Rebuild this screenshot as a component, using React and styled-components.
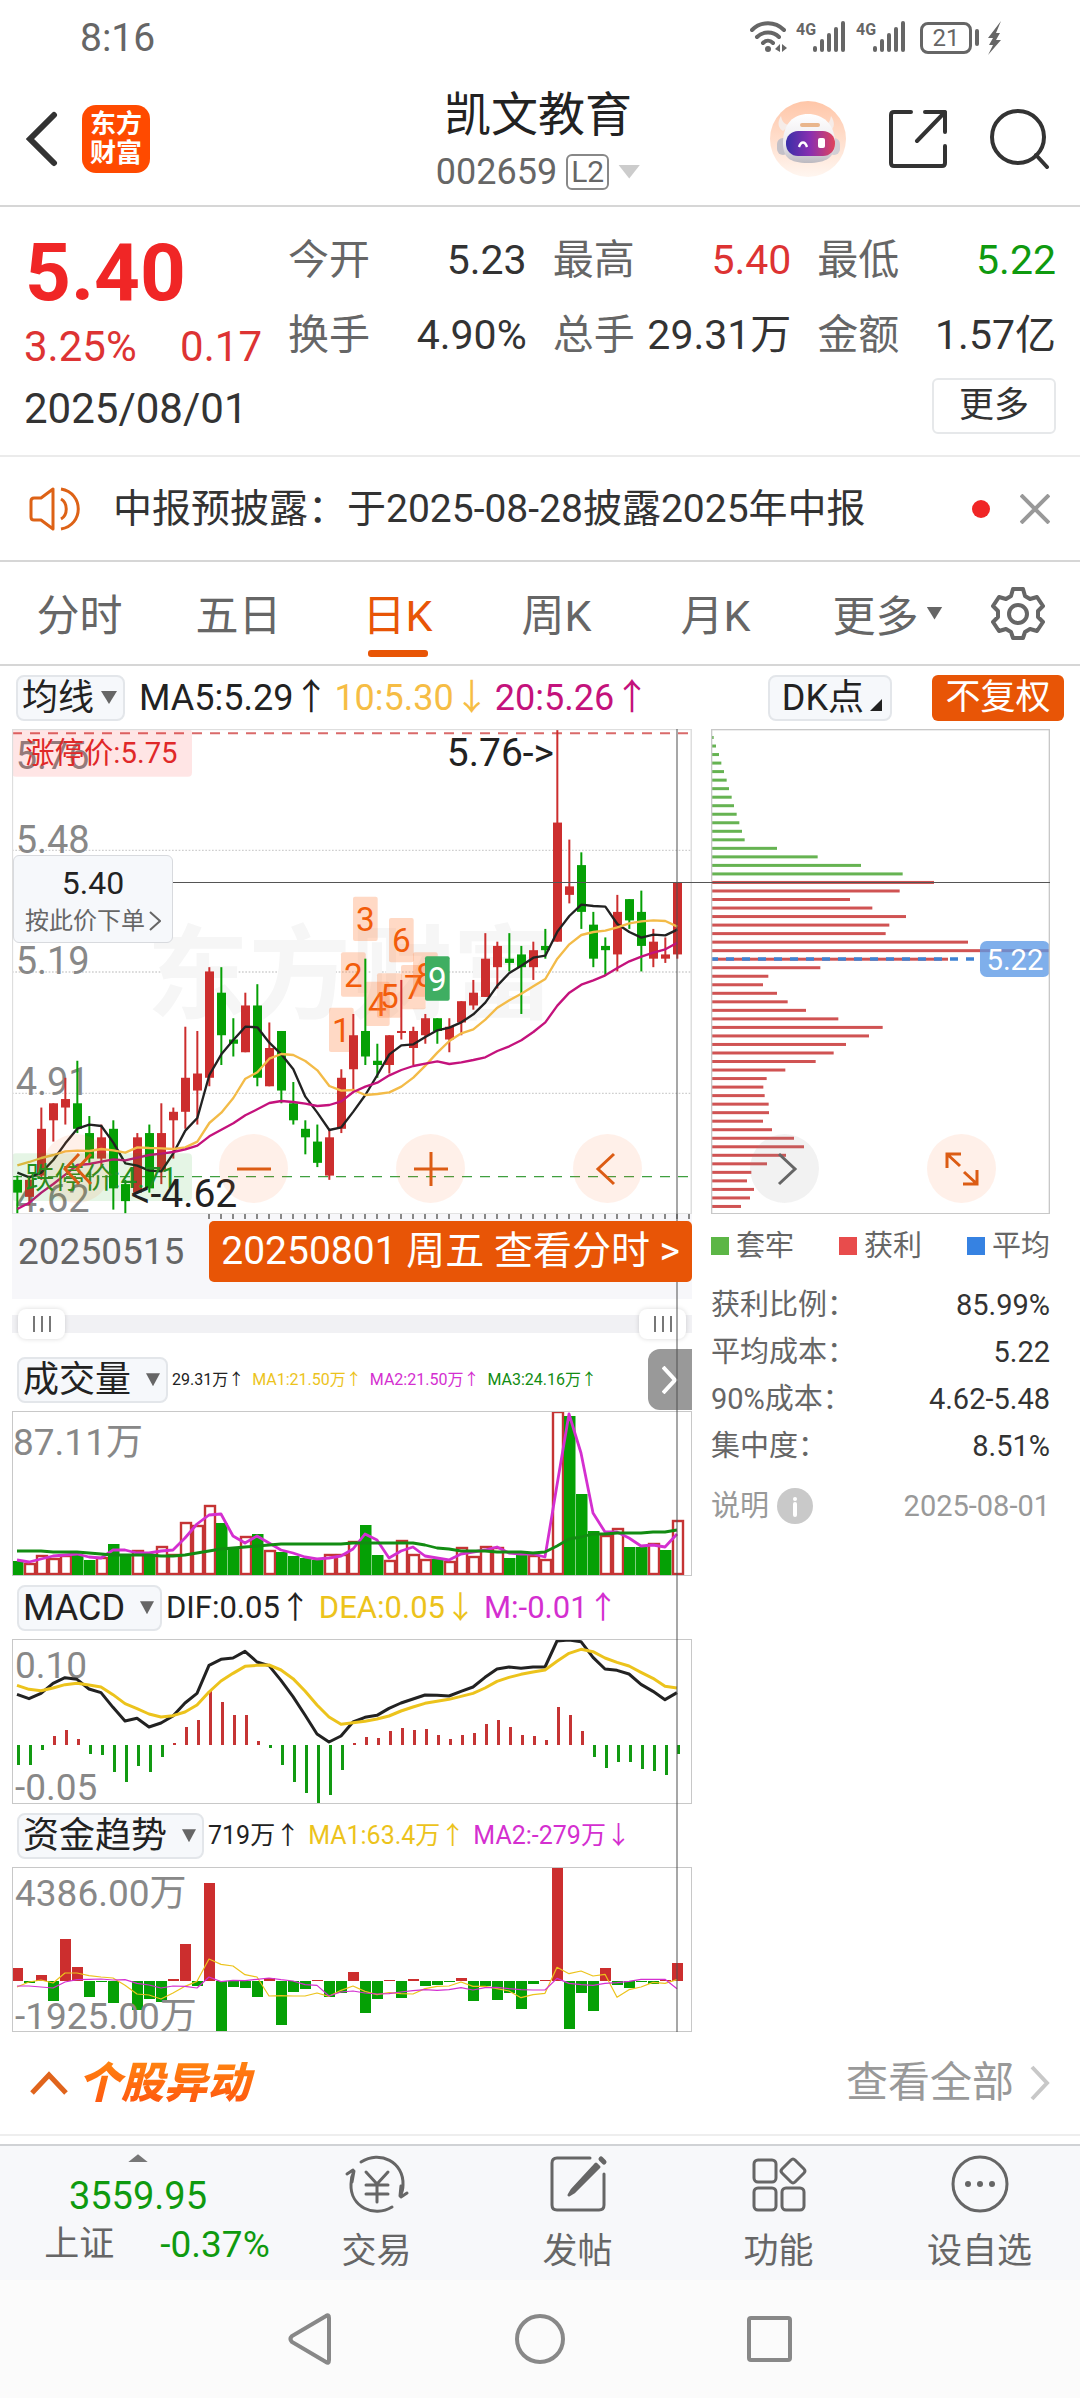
import styled, { createGlobalStyle } from "styled-components";

const RED = "#cc2e2e";
const GREEN = "#05a005";
const ORANGE = "#e85506";

const quotes = [
  { label: "今开", value: "5.23", color: "#333333" },
  { label: "最高", value: "5.40", color: "#dd3333" },
  { label: "最低", value: "5.22", color: "#0f9a0f" },
  { label: "换手", value: "4.90%", color: "#333333" },
  { label: "总手", value: "29.31万", color: "#333333" },
  { label: "金额", value: "1.57亿", color: "#333333" },
];

const periods = ["分时", "五日", "日K", "周K", "月K"];

// [open, close, high, low] in fen
const candles = [
  [470, 467, 471, 462], [466, 470, 471, 464], [471, 482, 487, 470],
  [484, 488, 488, 479], [487, 489, 494, 483], [488, 482, 498, 481],
  [481, 475, 485, 474], [475, 480, 483, 473], [482, 468, 484, 463],
  [469, 465, 470, 462], [467, 480, 481, 467], [481, 468, 483, 467],
  [472, 481, 488, 469], [484, 486, 487, 475], [486, 494, 506, 482],
  [491, 495, 505, 483], [494, 519, 520, 492], [514, 504, 520, 497],
  [503, 502, 508, 499], [500, 511, 514, 500], [511, 494, 516, 492],
  [492, 501, 507, 492], [505, 491, 505, 488], [488, 484, 493, 483],
  [482, 480, 484, 476], [479, 474, 483, 473], [471, 480, 482, 470],
  [482, 494, 496, 481], [496, 504, 509, 491], [505, 499, 522, 497],
  [498, 497, 502, 494], [497, 504, 504, 495], [505, 505, 517, 503],
  [501, 505, 506, 497], [504, 508, 509, 502], [508, 505, 508, 502],
  [503, 506, 508, 500], [507, 512, 512, 504], [511, 514, 517, 510],
  [513, 522, 528, 513], [520, 525, 526, 515], [522, 521, 528, 519],
  [523, 520, 525, 509], [520, 524, 526, 517], [525, 524, 529, 522],
  [526, 554, 576, 526], [537, 539, 550, 535], [544, 533, 547, 529],
  [530, 522, 533, 520], [525, 524, 527, 518], [523, 533, 537, 519],
  [536, 531, 536, 529], [533, 525, 538, 519], [522, 526, 529, 520],
  [522, 523, 527, 521], [523, 540, 540, 522],
];

const ma5 = [
  1358, 1372, 1358, 1320, 1270, 1226, 1214, 1218, 1268, 1330, 1337, 1352, 1354,
  1300, 1232, 1194, 1065, 1003, 960, 920, 922, 968, 1003, 1048, 1130, 1178,
  1230, 1222, 1175, 1125, 1065, 1003, 976, 973, 951, 931, 923, 907, 883, 848,
  797, 759, 737, 713, 707, 635, 588, 554, 558, 560, 612, 636, 653, 644, 646,
  629,
];
const ma10 = [
  1336, 1326, 1314, 1305, 1294, 1292, 1293, 1287, 1291, 1298, 1282, 1284, 1285,
  1287, 1282, 1265, 1209, 1178, 1134, 1076, 1057, 1016, 1002, 1005, 1023, 1051,
  1098, 1112, 1110, 1125, 1122, 1117, 1100, 1073, 1037, 998, 963, 940, 928,
  899, 863, 841, 821, 799, 777, 716, 673, 645, 636, 632, 622, 610, 604, 601,
  603, 620,
];
const ma20 = [
  1467, 1448, 1418, 1392, 1364, 1335, 1332, 1325, 1318, 1321, 1313, 1305, 1301,
  1296, 1288, 1277, 1249, 1229, 1210, 1186, 1168, 1149, 1143, 1146, 1151, 1158,
  1155, 1144, 1116, 1100, 1088, 1066, 1050, 1038, 1031, 1024, 1032, 1027, 1020,
  1012, 993, 979, 961, 936, 907, 857, 818, 794, 781, 766, 744, 724, 710, 698,
  688, 668,
];

// nine-turn marks: candle index, top, label
const marks = [
  [27, 863, "1"], [28, 697, "2"], [29, 530, "3"], [30, 785, "4"],
  [31, 760, "5"], [32, 594, "6"], [33, 735, "7"], [34, 697, "8"],
  [35, 709, "9"],
];

const chips = [
  8, 15, 24, 31, 39, 47, 54, 62, 69, 77, 85, 93, 101, 198, 320, 450, 575, 669,
  566, 417, 484, 585, 535, 524, 771, 1017, 711, 328, 172, 156, 198, 230, 285,
  382, 515, 474, 405, 368, 314, 223, 167, 157, 161, 173, 174, 156, 183, 249,
  279, 225, 168, 121, 108, 129, 117, 90, 65,
];

const volumes = [
  -14, 12, 20, 17, 20, -20, -15, 18, -31, -21, 25, -20, 29, 21, 53, 50, 70,
  -52, -26, 39, -41, 25, -23, -19, -17, -15, 21, 21, 34, -50, -20, 15, 35, 21,
  16, -16, 14, 28, 19, 29, 28, -17, -21, 20, 16, 164, -159, -81, -44, 40, 47,
  -28, -28, 32, -25, 55,
];
const volShort = [
  15, 13, 16, 19, 20, 21, 18, 17, 25, 25, 22, 22, 24, 25, 37, 51, 60, 61, 39,
  32, 39, 32, 25, 22, 18, 16, 17, 19, 26, 41, 35, 17, 24, 28, 19, 17, 15, 21,
  23, 25, 28, 22, 21, 21, 18, 90, 161, 122, 62, 43, 43, 37, 29, 30, 28, 41,
];
const volLong = [
  24, 24, 24, 23, 23, 23, 22, 21, 20, 20, 20, 20, 19, 19, 20, 22, 24, 26, 27,
  28, 29, 30, 31, 31, 31, 31, 31, 31, 32, 32, 32, 32, 32, 32, 30, 27, 26, 24,
  24, 24, 23, 23, 23, 22, 23, 29, 36, 38, 41, 41, 42, 42, 42, 43, 43, 45,
];

const macdBars = [
  -20, -20, -5, 9, 15, 6, -9, -10, -27, -37, -21, -27, -12, 2, 18, 25, 54, 43,
  30, 30, 4, -3, -20, -37, -48, -58, -50, -25, 2, 8, 7, 14, 17, 15, 16, 10, 6,
  10, 12, 21, 25, 18, 10, 9, 5, 38, 30, 14, -12, -23, -17, -17, -24, -26, -30,
  -9,
];
const dif = [
  375, 388, 372, 342, 325, 330, 359, 370, 414, 455, 447, 473, 461, 440, 401,
  372, 288, 270, 266, 246, 278, 289, 333, 382, 437, 494, 518, 500, 458, 444,
  438, 417, 401, 389, 377, 378, 380, 366, 353, 324, 299, 293, 297, 293, 293,
  215, 208, 217, 264, 299, 303, 314, 345, 366, 391, 370,
];
const dea = [
  348, 360, 364, 356, 346, 342, 347, 353, 376, 403, 418, 434, 443, 439, 428,
  407, 368, 335, 312, 291, 288, 287, 302, 328, 365, 407, 443, 465, 460, 456,
  449, 440, 425, 413, 402, 396, 390, 381, 372, 356, 336, 324, 315, 308, 302,
  276, 252, 240, 247, 266, 279, 290, 309, 327, 351, 356,
];

const fundBars = [
  13, -2, 6, -20, 42, 14, -16, -1, -22, 0, -29, -18, -21, 2, 37, -5, 98, -51,
  -6, -7, -16, 3, -44, -11, -8, 1, -16, -12, 9, -32, -18, 1, -17, 2, -5, -4,
  -1, 3, -20, -5, -19, -12, -28, -3, 1, 114, -48, -12, -30, 13, -4, -7, -1,
  -3, 1, 18,
];
const fundMa1 = [
  565, 550, 544, 553, 523, 523, 531, 535, 538, 560, 586, 589, 601, 583, 563,
  548, 481, 497, 502, 528, 535, 592, 591, 592, 592, 583, 593, 575, 562, 578,
  588, 582, 585, 586, 570, 563, 562, 550, 563, 563, 570, 577, 597, 588, 584,
  506, 525, 517, 532, 527, 596, 573, 565, 551, 554, 543,
];
const fundMa2 = [
  562, 562, 565, 568, 550, 543, 542, 541, 544, 543, 554, 559, 568, 562, 563,
  568, 535, 549, 545, 546, 542, 538, 543, 547, 558, 560, 592, 580, 577, 583,
  586, 585, 580, 576, 573, 575, 573, 567, 574, 567, 566, 570, 573, 574, 574,
  539, 554, 558, 560, 554, 552, 548, 542, 542, 542, 570,
];

const priceY = (fen) => 27 + (576 - fen) * 12.76;
const line = (data, toX, toY) =>
  data.map((v, i) => `${toX(i)},${toY(v)}`).join(" ");
const bigX = (i) => 52 + i * 36;
const paneX = (i) => 5 + i * 12;

const KLine = () => (
  <Chart viewBox="36 27 2040 1456" role="img" aria-label="日K线图">
    <g stroke="#cfcfcf" strokeWidth="4" strokeDasharray="5 5">
      <path d="M36 391H2076M36 756H2076M36 1120H2076" />
    </g>
    <text x="440" y="872" fontSize="306" fontWeight="700" fill="#f6f6f6">
      东方财富
    </text>
    <g fontSize="114" fill="#888888">
      <text x="47" y="146">5.76</text>
      <text x="47" y="398">5.48</text>
      <text x="47" y="762">5.19</text>
      <text x="47" y="1126">4.91</text>
      <text x="47" y="1477">4.62</text>
    </g>
    <path
      d="M36 40H2076"
      stroke="#d96a6a"
      strokeWidth="6"
      strokeDasharray="30 24"
    />
    <path
      d="M36 1370H2076"
      stroke="#3f9f3f"
      strokeWidth="4"
      strokeDasharray="30 24"
    />
    {marks.map(([i, top, label]) => (
      <g key={label}>
        <rect
          x={bigX(i) - 37}
          y={top}
          width="74"
          height="133"
          rx="6"
          fill={label === "9" ? "#3fae62" : "#ff8040"}
          fillOpacity={label === "9" ? 1 : 0.3}
        />
        <text
          x={bigX(i)}
          y={top + 103}
          fontSize="100"
          textAnchor="middle"
          fill={label === "9" ? "#ffffff" : "#f25c0a"}
        >
          {label}
        </text>
      </g>
    ))}
    {candles.map(([open, close, high, low], i) => {
      const color = close >= open ? RED : GREEN;
      const top = priceY(Math.max(open, close));
      const height = Math.max(Math.abs(open - close) * 12.76, 6);
      return (
        <g key={i} fill={color}>
          <rect
            x={bigX(i) - 3}
            y={priceY(high)}
            width="6"
            height={(high - low) * 12.76}
          />
          <rect x={bigX(i) - 13} y={top} width="27" height={height} />
        </g>
      );
    })}
    <g fill="none" strokeWidth="7" strokeLinejoin="round">
      <polyline points={line(ma5, bigX, (v) => v)} stroke="#222222" />
      <polyline points={line(ma10, bigX, (v) => v)} stroke="#f3bb48" />
      <polyline points={line(ma20, bigX, (v) => v)} stroke="#c4127c" />
    </g>
    <rect x="36" y="27" width="540" height="143" rx="12" fill="#ff0000" fillOpacity="0.1" />
    <text x="76" y="130" fontSize="88" fill="#e02828">
      涨停价:5.75
    </text>
    <rect x="36" y="1300" width="540" height="143" rx="12" fill="#00a000" fillOpacity="0.1" />
    <text x="76" y="1403" fontSize="88" fill="#1f8f1f">
      跌停价:4.71
    </text>
    <g fontSize="117" fill="#222222">
      <text x="1662" y="137" textAnchor="end">
        5.76-&gt;
      </text>
      <text x="392" y="1462">&lt;-4.62</text>
    </g>
    <rect x="37" y="28" width="2037" height="1454" fill="none" stroke="#dedede" strokeWidth="5" />
  </Chart>
);

const ChipChart = () => (
  <Chart viewBox="33 27 1017 1456" role="img" aria-label="筹码分布">
    {chips.map((w, i) => (
      <rect
        key={i}
        x="33"
        y={48 + i * 25.58}
        width={w}
        height="9"
        fill={i < 17 ? "#66b352" : "#d05353"}
      />
    ))}
    <path
      d="M30 717H822"
      stroke="#3f83d2"
      strokeWidth="10"
      strokeDasharray="24 24"
    />
    <rect x="840" y="663" width="210" height="108" rx="20" fill="#5b98e6" fillOpacity="0.78" />
    <text x="945" y="750" fontSize="88" textAnchor="middle" fill="#ffffff">
      5.22
    </text>
    <rect x="35" y="29" width="1013" height="1452" fill="none" stroke="#c8c8c8" strokeWidth="4" />
  </Chart>
);

const VolumeChart = () => (
  <Chart viewBox="0 0 680 165" role="img" aria-label="成交量图">
    <text x="1" y="44" fontSize="37" fill="#888888">
      87.11万
    </text>
    {volumes.map((v, i) =>
      v > 0 ? (
        <rect
          key={i}
          x={paneX(i) - 4}
          y={165 - v}
          width="10"
          height={v - 2}
          fill="#ffffff"
          stroke="#c53434"
          strokeWidth="2.4"
        />
      ) : (
        <rect key={i} x={paneX(i) - 5} y={164 + v} width="11.5" height={-v} fill={GREEN} />
      )
    )}
    <g fill="none" strokeWidth="2.8" strokeLinejoin="round">
      <polyline points={line(volShort, paneX, (v) => 164 - v)} stroke="#d42fd0" />
      <polyline points={line(volLong, paneX, (v) => 164 - v)} stroke="#128c12" />
    </g>
    <rect x="0.5" y="0.5" width="679" height="164" fill="none" stroke="#c8c8c8" />
  </Chart>
);

const MacdChart = () => (
  <Chart viewBox="0 0 680 165" role="img" aria-label="MACD图">
    <g fontSize="37" fill="#888888">
      <text x="3" y="39">0.10</text>
      <text x="3" y="161">-0.05</text>
    </g>
    {macdBars.map((v, i) => (
      <rect
        key={i}
        x={paneX(i)}
        y={v > 0 ? 106 - v : 106}
        width="3"
        height={Math.abs(v)}
        fill={v > 0 ? "#c53434" : "#129a12"}
      />
    ))}
    <g fill="none" strokeWidth="3" strokeLinejoin="round">
      <polyline
        points={line(dif, paneX, (v) => Math.max((v - 209) / 3, 1))}
        stroke="#222222"
      />
      <polyline points={line(dea, paneX, (v) => (v - 209) / 3)} stroke="#ecc31c" />
    </g>
    <rect x="0.5" y="0.5" width="679" height="164" fill="none" stroke="#c8c8c8" />
  </Chart>
);

const FundChart = () => (
  <Chart viewBox="0 0 680 165" role="img" aria-label="资金趋势图">
    {fundBars.map((v, i) => (
      <rect
        key={i}
        x={paneX(i) - 5}
        y={v > 0 ? 114 - v : 114}
        width="11"
        height={Math.abs(v)}
        fill={v > 0 ? RED : GREEN}
      />
    ))}
    <g fontSize="37" fill="#888888">
      <text x="3" y="39">4386.00万</text>
      <text x="3" y="162">-1925.00万</text>
    </g>
    <g fill="none" strokeWidth="1.2" strokeLinejoin="round">
      <polyline points={line(fundMa1, paneX, (v) => (v - 205) / 3)} stroke="#ecc31c" />
      <polyline points={line(fundMa2, paneX, (v) => (v - 205) / 3)} stroke="#d42fd0" />
    </g>
    <rect x="0.5" y="0.5" width="679" height="164" fill="none" stroke="#c8c8c8" />
  </Chart>
);

const SignalIcon = () => (
  <svg width="52" height="34" viewBox="0 0 52 34" fill="#666666">
    <text x="0" y="14" fontSize="16" fontWeight="700">
      4G
    </text>
    <rect x="17" y="25" width="4" height="6" rx="2" />
    <rect x="24" y="18" width="4" height="13" rx="2" />
    <rect x="31" y="12" width="4" height="19" rx="2" />
    <rect x="38" y="6" width="4" height="25" rx="2" />
    <rect x="45" y="0" width="4" height="31" rx="2" />
  </svg>
);

const StatusIcons = () => (
  <StatusRight>
    <svg width="38" height="34" viewBox="0 0 38 34" fill="none" stroke="#666666" strokeWidth="4" strokeLinecap="round">
      <path d="M2 9C11 0 25 0 34 9M7 16c6-6 16-6 22 0M13 22c3-3 7-3 10 0" />
      <circle cx="18" cy="28" r="3" fill="#666666" stroke="none" />
      <path d="M25 28l5-5v8zM37 27l-5-4v8z" fill="#666666" stroke="none" />
    </svg>
    <SignalGap>
      <SignalIcon />
    </SignalGap>
    <SignalGap>
      <SignalIcon />
    </SignalGap>
    <Battery>21</Battery>
    <svg width="32" height="36" viewBox="0 0 32 36" fill="#666666">
      <rect x="3" y="9" width="4" height="17" rx="2" />
      <path d="M29 1L16 18h5l-4 7h4l-5 10 13-15h-5l4-7h-4z" />
    </svg>
  </StatusRight>
);

const RobotIcon = () => (
  <svg width="76" height="76" viewBox="0 0 76 76">
    <defs>
      <linearGradient id="halo" x1="0" y1="0" x2="0" y2="1">
        <stop offset="0" stopColor="#ffc6a8" />
        <stop offset="1" stopColor="#fff6f0" />
      </linearGradient>
      <linearGradient id="visor" x1="0" y1="0" x2="1" y2="0">
        <stop offset="0" stopColor="#3a2fa8" />
        <stop offset="0.5" stopColor="#8a2fb0" />
        <stop offset="1" stopColor="#e0455c" />
      </linearGradient>
      <linearGradient id="shell" x1="0" y1="0" x2="0" y2="1">
        <stop offset="0" stopColor="#ffffff" />
        <stop offset="0.6" stopColor="#eceaee" />
        <stop offset="1" stopColor="#bcb9c0" />
      </linearGradient>
    </defs>
    <circle cx="38" cy="38" r="38" fill="url(#halo)" />
    <path d="M11 15c-4 6-3 12 2 15l7-6c-5 0-8-3-9-9zM61 15c4 6 4 12-1 15l-7-6c5 0 7-3 8-9z" fill="#f6ece8" />
    <rect x="7" y="37" width="12" height="17" rx="6" fill="#c4c1c8" />
    <rect x="58" y="37" width="12" height="17" rx="6" fill="#d2cfd5" />
    <path d="M13 42C13 22 24 13 38 13s27 9 27 29c0 14-8 20-27 20s-25-6-25-20z" fill="url(#shell)" />
    <rect x="16" y="30" width="49" height="25" rx="12" fill="url(#visor)" />
    <path d="M29 46c2-6 6-6 8 0" fill="none" stroke="#ffffff" strokeWidth="2.4" />
    <rect x="48" y="37" width="7" height="10" rx="2" fill="#ffffff" />
    <rect x="30" y="22" width="20" height="4" rx="2" fill="#e9b68c" />
  </svg>
);

const App = () => {
  return (
    <Page>
      <GlobalStyle />
      <StatusBar>
        <span>8:16</span>
        <StatusIcons />
      </StatusBar>

      <Header>
        <HeaderSide>
          <IconButton aria-label="返回">
            <svg width="32" height="58" viewBox="0 0 32 58" fill="none" stroke="#333333" strokeWidth="6" strokeLinecap="round">
              <path d="M28 5L4 29l24 24" />
            </svg>
          </IconButton>
          <Logo>
            东方
            <br />
            财富
          </Logo>
        </HeaderSide>
        <TitleBlock>
          <h1>凯文教育</h1>
          <Code>
            002659 <em>L2</em>
            <Triangle $w={22} $h={14} $color="#cccccc" />
          </Code>
        </TitleBlock>
        <HeaderActions>
          <IconButton aria-label="智能助手">
            <RobotIcon />
          </IconButton>
          <IconButton aria-label="分享">
            <svg width="58" height="58" viewBox="0 0 58 58" fill="none" stroke="#333333" strokeWidth="4" strokeLinecap="round" strokeLinejoin="round">
              <path d="M22 2H5Q2 2 2 5v48q0 3 3 3h48q3 0 3-3V36M36 2h20v20M56 2L28 31" />
            </svg>
          </IconButton>
          <IconButton aria-label="搜索">
            <svg width="60" height="60" viewBox="0 0 60 60" fill="none" stroke="#333333" strokeWidth="4" strokeLinecap="round">
              <circle cx="28" cy="28" r="26" />
              <path d="M46 46l11 12" />
            </svg>
          </IconButton>
        </HeaderActions>
      </Header>

      <Quote>
        <PriceBlock>
          <Price>5.40</Price>
          <Change>
            <span>3.25%</span>
            <span>0.17</span>
          </Change>
          <QuoteDate>2025/08/01</QuoteDate>
        </PriceBlock>
        <QuoteRight>
          <QuoteGrid>
            {quotes.map((q) => (
              <QuoteItem key={q.label} $color={q.color}>
                <dt>{q.label}</dt>
                <dd>{q.value}</dd>
              </QuoteItem>
            ))}
          </QuoteGrid>
          <MoreButton>更多</MoreButton>
        </QuoteRight>
      </Quote>

      <Notice>
        <svg width="52" height="44" viewBox="0 0 52 44" fill="none" stroke="#dd6216" strokeWidth="3" strokeLinejoin="round">
          <path d="M24 2v40L12 33H5q-3 0-3-3V14q0-3 3-3h7zM32 12c7 4 7 16 0 20M32 2c23 4 23 36 0 40" />
        </svg>
        <p>中报预披露：于2025-08-28披露2025年中报</p>
        <RedDot />
        <IconButton aria-label="关闭">
          <svg width="30" height="30" viewBox="0 0 30 30" stroke="#999999" strokeWidth="4">
            <path d="M1 1l28 28M29 1L1 29" />
          </svg>
        </IconButton>
      </Notice>

      <Tabs>
        {periods.map((p) => (
          <Tab key={p} $active={p === "日K"}>
            {p}
          </Tab>
        ))}
        <MoreTab>
          更多
          <Triangle $w={16} $h={13} $color="#666666" />
        </MoreTab>
        <SettingsButton aria-label="设置">
          <svg width="54" height="54" viewBox="0 0 54 54" fill="none" stroke="#666666" strokeWidth="4" strokeLinejoin="round">
            <path d="M22 3h10l2 7 5 3 7-2 6 9-5 5v6l5 5-6 9-7-2-5 3-2 6H22l-2-6-5-3-7 2-6-9 5-5v-6l-5-5 6-9 7 2 5-3z" />
            <circle cx="27" cy="28" r="9" />
          </svg>
        </SettingsButton>
      </Tabs>

      <Toolbar>
        <Picker>
          <select aria-label="主图指标" defaultValue="均线">
            <option>均线</option>
          </select>
          <Triangle $w={16} $h={13} $color="#666666" />
        </Picker>
        <Readout $size={36}>
          <Value $color="#222222">MA5:5.29↑</Value>
          <Value $color="#f6bd45">10:5.30↓</Value>
          <Value $color="#c4127c">20:5.26↑</Value>
        </Readout>
        <DkButton>
          DK点
          <svg width="12" height="12" viewBox="0 0 12 12">
            <path d="M12 0v12H0z" fill="#222222" />
          </svg>
        </DkButton>
        <RightsButton>不复权</RightsButton>
      </Toolbar>

      <Panels>
        <MainColumn>
          <PaneBox>
            <KLine />
            <OrderButton>
              <b>5.40</b>
              <span>
                按此价下单
                <svg width="12" height="20" viewBox="0 0 12 20" fill="none" stroke="#666666" strokeWidth="2">
                  <path d="M1 1l10 9-10 9" />
                </svg>
              </span>
            </OrderButton>
            <FloatRow>
              <RoundButton aria-label="快速后退">
                <svg width="36" height="36" viewBox="0 0 36 36">
                  <path d="M20 3L6 18l14 15M32 3L18 18l14 15" />
                </svg>
              </RoundButton>
              <RoundButton aria-label="缩小">
                <svg width="36" height="36" viewBox="0 0 36 36">
                  <path d="M1 18h34" />
                </svg>
              </RoundButton>
              <RoundButton aria-label="放大">
                <svg width="36" height="36" viewBox="0 0 36 36">
                  <path d="M1 18h34M18 1v34" />
                </svg>
              </RoundButton>
              <RoundButton aria-label="左移">
                <svg width="36" height="36" viewBox="0 0 36 36">
                  <path d="M24 3L8 18l16 15" />
                </svg>
              </RoundButton>
            </FloatRow>
          </PaneBox>

          <Axis>
            <span>20250515</span>
            <DayButton>20250801 周五 查看分时 &gt;</DayButton>
          </Axis>

          <RangeBox>
            <input type="range" aria-label="起始位置" defaultValue="0" />
            <input type="range" aria-label="结束位置" defaultValue="100" />
          </RangeBox>

          <PaneHead>
            <Picker $wide>
              <select aria-label="副图一" defaultValue="成交量">
                <option>成交量</option>
              </select>
              <Triangle $w={14} $h={13} $color="#666666" />
            </Picker>
            <Readout $size={16} $tight>
              <Value $color="#222222">29.31万↑</Value>
              <Value $color="#ecc31c">MA1:21.50万↑</Value>
              <Value $color="#d42fd0">MA2:21.50万↑</Value>
              <Value $color="#128c12">MA3:24.16万↑</Value>
            </Readout>
            <DrawerTab aria-label="展开">
              <svg width="16" height="28" viewBox="0 0 16 28" fill="none" stroke="#ffffff" strokeWidth="4">
                <path d="M1 1l12 13L1 27" />
              </svg>
            </DrawerTab>
          </PaneHead>
          <VolumeChart />

          <PaneHead>
            <Picker $wide>
              <select aria-label="副图二" defaultValue="MACD">
                <option>MACD</option>
              </select>
              <Triangle $w={14} $h={13} $color="#666666" />
            </Picker>
            <Readout $size={31} $tight>
              <Value $color="#222222">DIF:0.05↑</Value>
              <Value $color="#ecc31c">DEA:0.05↓</Value>
              <Value $color="#d42fd0">M:-0.01↑</Value>
            </Readout>
          </PaneHead>
          <MacdChart />

          <PaneHead>
            <Picker $wide>
              <select aria-label="副图三" defaultValue="资金趋势">
                <option>资金趋势</option>
              </select>
              <Triangle $w={14} $h={13} $color="#666666" />
            </Picker>
            <Readout $size={25} $tight>
              <Value $color="#222222">719万↑</Value>
              <Value $color="#ecc31c">MA1:63.4万↑</Value>
              <Value $color="#d42fd0">MA2:-279万↓</Value>
            </Readout>
          </PaneHead>
          <FundChart />
          <CursorV />
        </MainColumn>

        <SideColumn>
          <PaneBox>
            <ChipChart />
            <FloatRow $side>
              <RoundButton $grey aria-label="右移">
                <svg width="36" height="36" viewBox="0 0 36 36">
                  <path d="M12 3l16 15-16 15" />
                </svg>
              </RoundButton>
              <RoundButton aria-label="全屏">
                <svg width="36" height="36" viewBox="0 0 36 36">
                  <path d="M17 3H3v14M3 3l13 12M19 33h14V19M33 33L20 21" />
                </svg>
              </RoundButton>
            </FloatRow>
          </PaneBox>
          <Legend>
            <LegendItem $color="#5cb646">套牢</LegendItem>
            <LegendItem $color="#e84c4c">获利</LegendItem>
            <LegendItem $color="#3682e2">平均</LegendItem>
          </Legend>
          <Stats>
            <tbody>
              <tr>
                <th scope="row">获利比例：</th>
                <td>85.99%</td>
              </tr>
              <tr>
                <th scope="row">平均成本：</th>
                <td>5.22</td>
              </tr>
              <tr>
                <th scope="row">90%成本：</th>
                <td>4.62-5.48</td>
              </tr>
              <tr>
                <th scope="row">集中度：</th>
                <td>8.51%</td>
              </tr>
            </tbody>
          </Stats>
          <Explain>
            <span>说明</span>
            <svg width="36" height="36" viewBox="0 0 36 36">
              <circle cx="18" cy="18" r="18" fill="#c9c9c9" />
              <circle cx="18" cy="11" r="2" fill="#ffffff" />
              <path d="M18 16v11" stroke="#ffffff" strokeWidth="4" strokeLinecap="round" />
            </svg>
            <time>2025-08-01</time>
          </Explain>
        </SideColumn>
        <CursorH />
      </Panels>

      <Movers>
        <svg width="38" height="24" viewBox="0 0 38 24" fill="none" stroke="#e0641c" strokeWidth="5">
          <path d="M2 22L19 4l17 18" />
        </svg>
        <h2>个股异动</h2>
        <a href="#all">
          查看全部
          <svg width="20" height="36" viewBox="0 0 20 36" fill="none" stroke="#c8c8c8" strokeWidth="4">
            <path d="M2 2l15 16L2 34" />
          </svg>
        </a>
      </Movers>

      <BottomBar>
        <IndexBlock>
          <Triangle $w={20} $h={8} $color="#777777" $up />
          <strong>3559.95</strong>
          <div>
            <span>上证</span>
            <b>-0.37%</b>
          </div>
        </IndexBlock>
        <NavItem>
          <svg width="66" height="60" viewBox="0 0 66 60">
            <path d="M17 8C36-4 60 8 59 31c0 5-1 8-3 11l1-10M57 43l6-4M48 53C30 64 6 53 7 30c0-5 1-9 3-13L8 28M9 16l-6 4" />
            <path d="M22 18l11 12 11-12M33 30v18M22 31h22M22 40h22" />
          </svg>
          交易
        </NavItem>
        <NavItem>
          <svg width="60" height="60" viewBox="0 0 60 60">
            <path d="M42 4H9q-5 0-5 5v42q0 5 5 5h42q5 0 5-5V20" />
            <path d="M48 10L24 36l-3 5 5-3 25-25z" fill="#666666" />
            <path d="M53 5l3 3" strokeWidth="5" />
          </svg>
          发帖
        </NavItem>
        <NavItem>
          <svg width="60" height="60" viewBox="0 0 60 60">
            <rect x="5" y="6" width="22" height="22" rx="4" />
            <rect x="5" y="34" width="22" height="22" rx="4" />
            <rect x="33" y="34" width="22" height="22" rx="4" />
            <path d="M42 6q2-2 4 0l9 9q2 2 0 4l-9 9q-2 2-4 0l-9-9q-2-2 0-4z" />
          </svg>
          功能
        </NavItem>
        <NavItem>
          <svg width="60" height="60" viewBox="0 0 60 60">
            <circle cx="30" cy="30" r="27" />
            <g fill="#666666" stroke="none">
              <circle cx="18" cy="30" r="3" />
              <circle cx="30" cy="30" r="3" />
              <circle cx="42" cy="30" r="3" />
            </g>
          </svg>
          设自选
        </NavItem>
      </BottomBar>

      <SystemNav>
        <IconButton aria-label="系统返回">
          <svg width="50" height="52" viewBox="0 0 50 52">
            <path d="M40 3q3-2 3 2v42q0 4-3 2L6 29q-3-3 0-6z" />
          </svg>
        </IconButton>
        <IconButton aria-label="主屏幕">
          <svg width="50" height="52" viewBox="0 0 50 52">
            <circle cx="25" cy="26" r="23" />
          </svg>
        </IconButton>
        <IconButton aria-label="最近任务">
          <svg width="50" height="52" viewBox="0 0 50 52">
            <rect x="5" y="5" width="41" height="42" rx="2" />
          </svg>
        </IconButton>
      </SystemNav>
    </Page>
  );
};

const GlobalStyle = createGlobalStyle`
  * {
    box-sizing: border-box;
  }

  body {
    margin: 0;
    background: #ffffff;
  }

  body, button, select, input {
    font-family: Roboto, "Noto Sans CJK SC", sans-serif;
  }

  h1, h2, p, dl, dt, dd {
    margin: 0;
    font-weight: 400;
  }

  button {
    border: 0;
    padding: 0;
    background: none;
    cursor: pointer;
  }

  svg {
    display: block;
    flex: none;
  }
`;

const Page = styled.div`
  width: 100%;
  color: #333333;
  background: #ffffff;
`;

const StatusBar = styled.div`
  display: flex;
  align-items: center;
  justify-content: space-between;
  height: 72px;
  padding: 4px 76px 0 80px;
  font-size: 39px;
  color: #666666;
`;

const StatusRight = styled.div`
  display: flex;
  align-items: center;
`;

const SignalGap = styled.span`
  margin-left: 8px;
`;

const Battery = styled.span`
  display: flex;
  align-items: center;
  justify-content: center;
  width: 52px;
  height: 32px;
  margin-left: 12px;
  border: 3px solid #666666;
  border-radius: 8px;
  font-size: 24px;
  line-height: 24px;
`;

const Header = styled.header`
  display: grid;
  grid-template-columns: 1fr auto 1fr;
  align-items: center;
  height: 135px;
  padding: 0 30px 0 26px;
  border-bottom: 2px solid #d6d6d6;
`;

const HeaderSide = styled.div`
  display: flex;
  align-items: center;
  gap: 24px;
`;

const IconButton = styled.button`
  display: flex;
`;

const Logo = styled.div`
  width: 68px;
  height: 68px;
  padding-top: 5px;
  border-radius: 14px;
  background: #ff4a00;
  color: #ffffff;
  font-size: 26px;
  font-weight: 700;
  line-height: 29px;
  text-align: center;
`;

const TitleBlock = styled.div`
  padding-top: 6px;
  text-align: center;

  h1 {
    font-size: 47px;
    line-height: 60px;
    color: #222222;
  }
`;

const Code = styled.div`
  display: flex;
  align-items: center;
  justify-content: center;
  gap: 9px;
  font-size: 36px;
  line-height: 54px;
  color: #666666;

  em {
    padding: 0 3px;
    border: 2px solid #888888;
    border-radius: 6px;
    font-style: normal;
    font-size: 30px;
    line-height: 32px;
  }
`;

const HeaderActions = styled.div`
  display: flex;
  align-items: center;
  justify-content: flex-end;
  gap: 43px;
`;

const Triangle = styled.i`
  flex: none;
  width: ${(props) => props.$w}px;
  height: ${(props) => props.$h}px;
  background: ${(props) => props.$color};
  clip-path: ${(props) =>
    props.$up
      ? "polygon(50% 0, 100% 100%, 0 100%)"
      : "polygon(0 0, 100% 0, 50% 100%)"};
`;

const Quote = styled.section`
  display: flex;
  gap: 26px;
  height: 250px;
  padding: 0 24px;
  border-bottom: 2px solid #ebebeb;
`;

const PriceBlock = styled.div`
  width: 238px;
  padding-top: 20px;
`;

const Price = styled.div`
  padding-left: 1px;
  font-size: 80px;
  line-height: 92px;
  font-weight: 700;
  color: #f02626;
`;

const Change = styled.div`
  display: flex;
  justify-content: space-between;
  font-size: 42px;
  line-height: 56px;
  color: #dd3333;
`;

const QuoteDate = styled.div`
  font-size: 42px;
  line-height: 68px;
  color: #333333;
`;

const QuoteRight = styled.div`
  flex: 1;
  display: flex;
  flex-direction: column;
  align-items: flex-end;
`;

const QuoteGrid = styled.dl`
  display: grid;
  grid-template-columns: repeat(3, 1fr);
  column-gap: 26px;
  width: 100%;
  padding-top: 16px;
`;

const QuoteItem = styled.div`
  display: flex;
  justify-content: space-between;
  font-size: 41px;
  line-height: 75px;
  white-space: nowrap;

  dt {
    color: #666666;
  }

  dd {
    color: ${(props) => props.$color};
  }
`;

const MoreButton = styled.button`
  width: 124px;
  height: 56px;
  margin-top: 5px;
  border: 2px solid #e6e8ea;
  border-radius: 6px;
  font-size: 35px;
  line-height: 48px;
  color: #333333;
`;

const Notice = styled.section`
  display: flex;
  align-items: center;
  height: 105px;
  padding: 0 30px 0 29px;
  border-bottom: 2px solid #d6d6d6;

  p {
    flex: 1;
    padding-left: 32px;
    font-size: 39px;
    line-height: 48px;
  }
`;

const RedDot = styled.span`
  width: 18px;
  height: 18px;
  margin-right: 30px;
  border-radius: 50%;
  background: #f02626;
`;

const Tabs = styled.nav`
  display: flex;
  height: 104px;
  padding-right: 24px;
  border-bottom: 2px solid #d6d6d6;
`;

const Tab = styled.button`
  flex: 159;
  display: flex;
  flex-direction: column;
  align-items: center;
  padding-top: 24px;
  font-size: 43px;
  line-height: 60px;
  color: ${(props) => (props.$active ? ORANGE : "#666666")};

  &::after {
    content: "";
    width: 60px;
    height: 7px;
    margin-top: 4px;
    border-radius: 3px;
    background: ${(props) => (props.$active ? ORANGE : "transparent")};
  }
`;

const MoreTab = styled.button`
  flex: 185;
  display: flex;
  align-items: center;
  justify-content: center;
  gap: 8px;
  font-size: 43px;
  color: #666666;
`;

const SettingsButton = styled.button`
  flex: 76;
  display: flex;
  align-items: center;
  justify-content: center;
`;

const Toolbar = styled.div`
  display: flex;
  align-items: center;
  height: 63px;
  padding: 0 16px;
`;

const Picker = styled.label`
  flex: none;
  display: flex;
  align-items: center;
  gap: ${(props) => (props.$wide ? 14 : 6)}px;
  height: 46px;
  padding: 0 6px 0 4px;
  border: 2px solid #e3e6ea;
  border-radius: 8px;
  background: #f6f8fb;

  select {
    appearance: none;
    border: 0;
    padding: 0;
    background: none;
    color: #222222;
    font-size: 36px;
    line-height: 42px;
  }
`;

const Readout = styled.div`
  flex: 1;
  display: flex;
  gap: ${(props) => (props.$tight ? 8 : 5)}px;
  padding-left: ${(props) => (props.$tight ? 4 : 14)}px;
  font-size: ${(props) => props.$size}px;
  line-height: 40px;
  white-space: nowrap;
`;

const Value = styled.span`
  color: ${(props) => props.$color};
`;

const DkButton = styled.button`
  display: flex;
  align-items: flex-end;
  gap: 6px;
  height: 46px;
  padding: 0 8px 8px 12px;
  margin-right: 40px;
  border: 2px solid #e3e6ea;
  border-radius: 8px;
  background: #f6f8fb;
  color: #222222;
  font-size: 36px;
  line-height: 26px;
`;

const RightsButton = styled.button`
  width: 132px;
  height: 46px;
  border-radius: 6px;
  background: ${ORANGE};
  color: #ffffff;
  font-size: 35px;
  line-height: 46px;
`;

const Panels = styled.main`
  position: relative;
  display: grid;
  grid-template-columns: 680fr 339fr;
  column-gap: 19px;
  align-items: start;
  padding: 0 30px 0 12px;
`;

const MainColumn = styled.div`
  position: relative;
  min-width: 0;
`;

const SideColumn = styled.aside`
  min-width: 0;
`;

const PaneBox = styled.div`
  position: relative;
`;

const Chart = styled.svg`
  width: 100%;
  height: auto;
`;

const OrderButton = styled.button`
  position: absolute;
  left: 1px;
  top: 126px;
  display: flex;
  flex-direction: column;
  align-items: center;
  width: 160px;
  height: 88px;
  padding-top: 8px;
  border: 1px solid #d8dade;
  border-radius: 6px;
  background: #f6f8fb;
  color: #222222;

  b {
    font-weight: 400;
    font-size: 32px;
    line-height: 38px;
  }

  span {
    display: flex;
    align-items: center;
    gap: 4px;
    font-size: 24px;
    line-height: 38px;
    color: #666666;
  }
`;

const FloatRow = styled.div`
  position: absolute;
  left: ${(props) => (props.$side ? 39 : 30)}px;
  bottom: 11px;
  display: flex;
  gap: 108px;
`;

const RoundButton = styled.button`
  display: flex;
  align-items: center;
  justify-content: center;
  width: 69px;
  height: 69px;
  border-radius: 50%;
  background: ${(props) =>
    props.$grey ? "rgba(150, 150, 150, 0.12)" : "rgba(255, 110, 40, 0.1)"};

  svg {
    fill: none;
    stroke: ${(props) => (props.$grey ? "#666666" : "#dc5c14")};
    stroke-width: 3;
  }
`;

const Axis = styled.div`
  display: flex;
  justify-content: space-between;
  align-items: flex-start;
  height: 85px;
  padding: 7px 0 0 6px;
  background:
    repeating-linear-gradient(90deg, #888888 0 2px, transparent 2px 12px) 196px
      0 / 484px 5px no-repeat,
    #f7f7fa;
  font-size: 37px;
  line-height: 61px;
  color: #666666;
`;

const DayButton = styled.button`
  position: relative;
  z-index: 2;
  height: 61px;
  padding: 0 12px;
  border-radius: 5px;
  background: ${ORANGE};
  color: #ffffff;
  font-size: 39px;
  line-height: 61px;
  white-space: nowrap;
`;

const RangeBox = styled.div`
  display: grid;
  align-items: center;
  height: 49px;
  padding: 0 6px;
  background: linear-gradient(#f1f1f4, #f1f1f4) center / 100% 18px no-repeat;

  input {
    grid-area: 1 / 1;
    appearance: none;
    width: 100%;
    height: 30px;
    margin: 0;
    background: none;
    pointer-events: none;
  }

  input::-webkit-slider-thumb {
    appearance: none;
    pointer-events: auto;
    width: 47px;
    height: 30px;
    border-radius: 8px;
    background:
      linear-gradient(#777777, #777777) 15px center / 2px 16px no-repeat,
      linear-gradient(#777777, #777777) 23px center / 2px 16px no-repeat,
      linear-gradient(#777777, #777777) 31px center / 2px 16px no-repeat,
      #ffffff;
    box-shadow: 0 0 5px rgba(0, 0, 0, 0.15);
  }
`;

const PaneHead = styled.div`
  display: flex;
  align-items: center;
  height: 63px;
  padding-left: 5px;
`;

const DrawerTab = styled.button`
  flex: none;
  display: flex;
  align-items: center;
  justify-content: center;
  width: 44px;
  height: 61px;
  border-radius: 12px 0 0 12px;
  background: #999999;
`;

const CursorV = styled.div`
  position: absolute;
  top: 0;
  bottom: 0;
  right: 14px;
  width: 2px;
  background: rgba(80, 80, 80, 0.5);
  pointer-events: none;
`;

const CursorH = styled.div`
  position: absolute;
  top: 153px;
  left: 173px;
  right: 30px;
  height: 1px;
  background: #555555;
  pointer-events: none;
`;

const Legend = styled.div`
  display: flex;
  justify-content: space-between;
  padding-top: 12px;
  font-size: 29px;
  line-height: 40px;
  color: #666666;
`;

const LegendItem = styled.span`
  display: flex;
  align-items: center;
  gap: 7px;

  &::before {
    content: "";
    width: 18px;
    height: 18px;
    background: ${(props) => props.$color};
  }
`;

const Stats = styled.table`
  width: 100%;
  margin-top: 16px;
  border-collapse: collapse;
  font-size: 29px;
  line-height: 47px;

  th {
    padding: 0;
    font-weight: 400;
    text-align: left;
    color: #666666;
  }

  td {
    padding: 0;
    text-align: right;
    color: #333333;
  }
`;

const Explain = styled.div`
  display: flex;
  align-items: center;
  gap: 8px;
  padding-top: 16px;
  font-size: 29px;
  line-height: 40px;
  color: #999999;

  time {
    margin-left: auto;
  }
`;

const Movers = styled.section`
  display: flex;
  align-items: center;
  height: 104px;
  margin-bottom: 8px;
  padding: 0 30px;
  border-bottom: 2px solid #eeeeee;

  h2 {
    padding: 0 12px 0 10px;
    font-size: 43px;
    line-height: 56px;
    font-weight: 900;
    font-style: italic;
    color: transparent;
    background: linear-gradient(#ff8a10, #ff5010);
    background-clip: text;
  }

  a {
    display: flex;
    align-items: center;
    gap: 16px;
    margin-left: auto;
    font-size: 42px;
    line-height: 56px;
    color: #999999;
    text-decoration: none;
  }
`;

const BottomBar = styled.nav`
  display: flex;
  height: 136px;
  border-top: 2px solid #d0d2d5;
  background: #f7f8fa;
`;

const IndexBlock = styled.div`
  display: flex;
  flex-direction: column;
  align-items: center;
  flex: 276;
  padding-top: 8px;
  color: #0f9a0f;

  strong {
    margin-top: 10px;
    font-weight: 400;
    font-size: 38px;
    line-height: 48px;
  }

  div {
    display: flex;
    gap: 46px;
    padding-left: 38px;
    font-size: 35px;
    line-height: 50px;
  }

  span {
    color: #666666;
  }

  b {
    font-weight: 400;
    font-size: 37px;
  }
`;

const NavItem = styled.button`
  flex: 201;
  display: flex;
  flex-direction: column;
  align-items: center;
  gap: 16px;
  padding-top: 8px;
  font-size: 35px;
  line-height: 44px;
  color: #666666;

  svg {
    fill: none;
    stroke: #666666;
    stroke-width: 3;
    stroke-linecap: round;
    stroke-linejoin: round;
  }
`;

const SystemNav = styled.div`
  display: flex;
  align-items: center;
  justify-content: center;
  gap: 179px;
  height: 118px;
  background: #fbfbfb;

  svg {
    fill: none;
    stroke: #888888;
    stroke-width: 4;
  }
`;

export default App;
